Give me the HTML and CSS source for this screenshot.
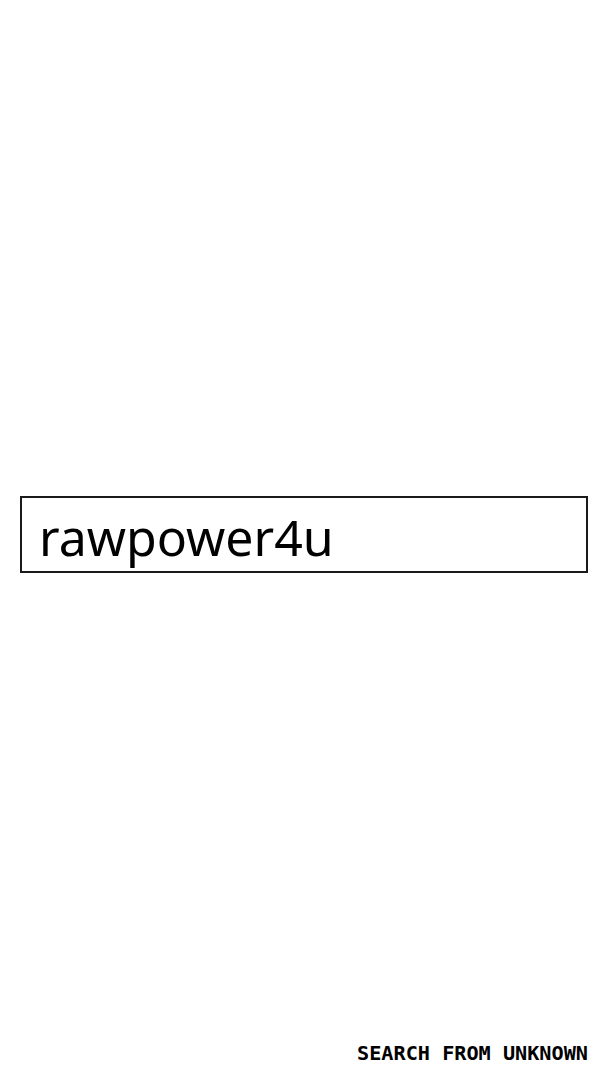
FILE: index.html
```html
<!DOCTYPE html>
<html lang="en">
<head>
<meta charset="utf-8">
<title>Search from unknown</title>
<link rel="stylesheet" href="styles.css">
</head>
<body>
<div class="page">
  <main class="main">
    <div class="search-box">
      <span class="search-text">rawpower4u</span>
    </div>
  </main>
  <footer class="footer">SEARCH FROM UNKNOWN</footer>
</div>
</body>
</html>
```
FILE: styles.css
```css
html, body {
  margin: 0;
  padding: 0;
  background: #ffffff;
}
.page {
  width: 608px;
  height: 1080px;
  display: flex;
  flex-direction: column;
  box-sizing: border-box;
}
.main {
  flex: 1;
  padding: 496px 20px 0 20px;
}
.search-box {
  height: 77px;
  box-sizing: border-box;
  border: 2px solid #1a1a1a;
  display: flex;
  align-items: center;
  padding: 4px 0 0 17px;
}
.search-text {
  font-family: "Noto Sans", "Open Sans", sans-serif;
  font-size: 50px;
  color: #000;
  line-height: 1;
}
.footer {
  align-self: flex-end;
  padding: 0 20px 15px 0;
  font-family: "DejaVu Sans Mono", "Liberation Mono", monospace;
  font-weight: bold;
  font-size: 20.2px;
  line-height: 24px;
  color: #000;
}
```
